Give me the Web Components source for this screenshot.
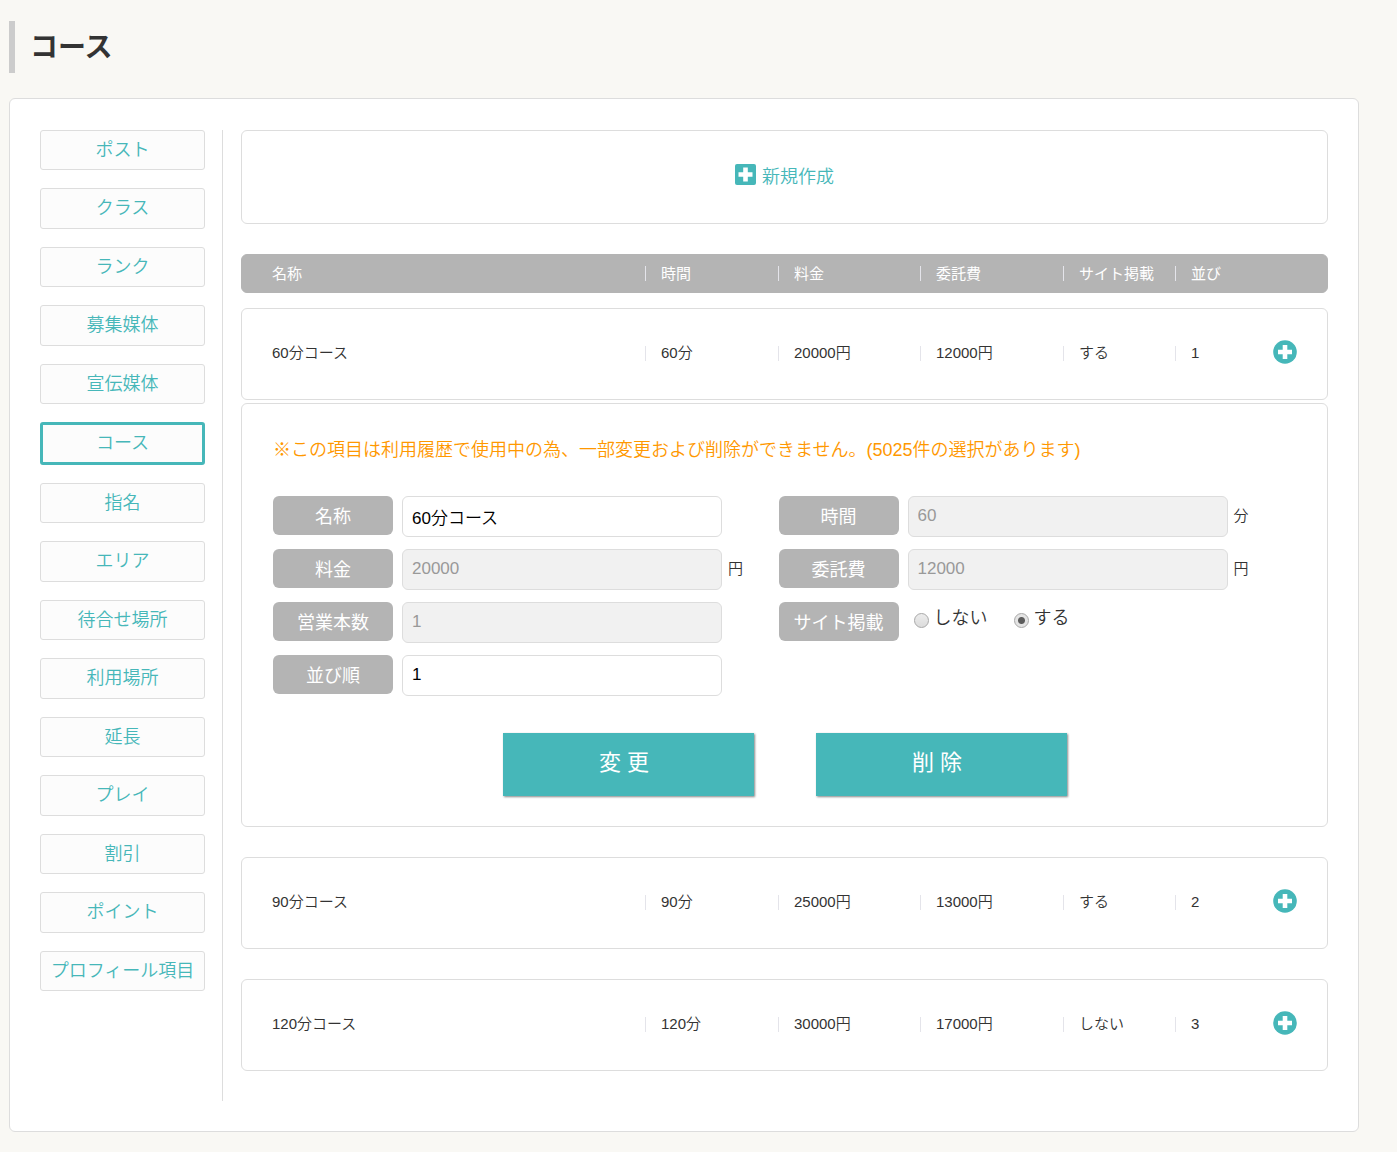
<!DOCTYPE html>
<html lang="ja">
<head>
<meta charset="utf-8">
<meta name="viewport" content="width=device-width, initial-scale=1">
<title>コース</title>
<style>
:root {
  --teal: #46b7b9;
  --grey: #b4b4b4;
  --line: #ddd;
}
body {
  margin: 0;
  background: #f9f8f4;
  color: #333;
  font: 350 15px/20px "Liberation Sans", "Noto Sans CJK JP", sans-serif;
}
</style>
</head>
<body>
<settings-page>
  <page-title slot="title">コース</page-title>
  <settings-nav slot="nav">
    <nav-item>ポスト</nav-item>
    <nav-item>クラス</nav-item>
    <nav-item>ランク</nav-item>
    <nav-item>募集媒体</nav-item>
    <nav-item>宣伝媒体</nav-item>
    <nav-item current>コース</nav-item>
    <nav-item>指名</nav-item>
    <nav-item>エリア</nav-item>
    <nav-item>待合せ場所</nav-item>
    <nav-item>利用場所</nav-item>
    <nav-item>延長</nav-item>
    <nav-item>プレイ</nav-item>
    <nav-item>割引</nav-item>
    <nav-item>ポイント</nav-item>
    <nav-item>プロフィール項目</nav-item>
  </settings-nav>
  <create-link>新規作成</create-link>
  <course-table></course-table>
</settings-page>

<script>
class BaseElement extends HTMLElement {
  connectedCallback() {
    if (this.shadowRoot) return;
    this.attachShadow({ mode: 'open' }).innerHTML =
      '<style>*{box-sizing:border-box}' + this.css() + '</style>' + this.html();
  }
}

customElements.define('settings-page', class extends BaseElement {
  css() { return `
    :host { display: block; padding: 21px 38px 20px 9px; }
    .panel { display: flex; margin-top: 25px; padding: 31px 30px 30px; border: 1px solid var(--line); border-radius: 6px; background: #fff; }
    aside { flex: none; padding-right: 17px; border-right: 1px solid var(--line); }
    main { flex: 1; min-width: 0; padding-left: 18px; }
  `; }
  html() { return `
    <header><slot name="title"></slot></header>
    <div class="panel">
      <aside><slot name="nav"></slot></aside>
      <main><slot></slot></main>
    </div>`; }
});

customElements.define('page-title', class extends BaseElement {
  css() { return `
    :host { display: block; }
    h1 { margin: 0; padding: 2px 0 0 15px; border-left: 6px solid #ccc; font-size: 28px; line-height: 50px; font-weight: 700; }
  `; }
  html() { return '<h1><slot></slot></h1>'; }
});

customElements.define('settings-nav', class extends BaseElement {
  css() { return `
    :host { display: block; }
    nav { display: flex; flex-direction: column; gap: 18px; width: 165px; min-height: 861px; }
    ::slotted(*) { flex: 1 0 auto; }
  `; }
  html() { return '<nav aria-label="設定"><slot></slot></nav>'; }
});

customElements.define('nav-item', class extends BaseElement {
  css() { return `
    :host { display: flex; }
    a { flex: 1; padding: 1px 0; border: 1px solid var(--line); border-radius: 3px; background: #fcfcfc;
        color: var(--teal); font-size: 18px; line-height: 36px; text-align: center; text-decoration: none; }
    a[aria-current] { padding: 0; border: 3px solid var(--teal); }
  `; }
  html() { return `<a href="#"${this.hasAttribute('current') ? ' aria-current="page"' : ''}><slot></slot></a>`; }
});

customElements.define('plus-icon', class extends BaseElement {
  css() { return `
    :host { display: block; color: var(--teal); }
    svg { display: block; }
  `; }
  html() {
    return this.getAttribute('shape') === 'square'
      ? '<svg width="21" height="21" viewBox="0 0 21 21" aria-hidden="true"><rect width="21" height="21" rx="2" fill="currentColor"/><path d="M8.200 3.500h4.600v4.700h4.700v4.600h-4.700v4.700H8.200v-4.700H3.500V8.200h4.700z" fill="#fff"/></svg>'
      : '<svg width="24" height="24" viewBox="0 0 24 24" aria-hidden="true"><circle cx="12" cy="12" r="11.800" fill="currentColor"/><path d="M9.700 5h4.600v4.700H19v4.600h-4.700V19H9.700v-4.700H5V9.700h4.700z" fill="#fff"/></svg>';
  }
});

customElements.define('create-link', class extends BaseElement {
  css() { return `
    :host { display: block; margin-bottom: 30px; }
    a { display: flex; justify-content: center; align-items: center; gap: 6px; height: 94px; padding-bottom: 1px;
        border: 1px solid var(--line); border-radius: 6px; color: var(--teal); font-size: 18px; line-height: 24px; text-decoration: none; }
    plus-icon { margin-bottom: 5px; }
  `; }
  html() { return '<a href="#"><plus-icon shape="square"></plus-icon><span><slot></slot></span></a>'; }
});

const COURSES = [
  ['60分コース', '60分', '20000円', '12000円', 'する', '1'],
  ['90分コース', '90分', '25000円', '13000円', 'する', '2'],
  ['120分コース', '120分', '30000円', '17000円', 'しない', '3']
];

customElements.define('course-table', class extends BaseElement {
  css() { return `
    :host { display: block; }
    table, thead, tbody { display: block; }
    tr.cols { display: grid; grid-template-columns: 373fr 133fr 142fr 143fr 112fr 98fr 24px; align-items: center;
      padding: 0 30px; border: 1px solid var(--line); border-radius: 6px; }
    thead tr.cols { height: 39px; margin-bottom: 15px; border-color: var(--grey); background: var(--grey); color: #fff; font-weight: 400; }
    tbody tr.cols { height: 92px; margin-bottom: 30px; padding-bottom: 2px; }
    tbody tr.open { margin-bottom: 3px; }
    th, td { padding: 0; font-weight: inherit; text-align: left; white-space: nowrap; }
    .cell { display: flex; align-items: center; gap: 15px; }
    .cell::before { content: ""; width: 1px; height: 15px; background: #e4e4ea; }
    tr.detail, tr.detail > td { display: block; }
    tr.detail { margin-bottom: 30px; }
    button { display: block; margin-bottom: 2px; padding: 0; border: 0; background: none; cursor: pointer; }
  `; }
  html() {
    const heads = ['名称', '時間', '料金', '委託費', 'サイト掲載', '並び'];
    const cells = (tag, role, list) => list.map((t, i) =>
      `<${tag} role="${role}"${i ? ' class="cell"' : ''}>${t}</${tag}>`).join('');
    const rows = COURSES.map((c, i) => `
      <tr role="row" class="cols${i ? '' : ' open'}">${cells('td', 'cell', c)}
        <td role="cell"><button type="button" aria-label="${c[0]}" aria-expanded="${!i}"><plus-icon></plus-icon></button></td>
      </tr>${i ? '' : '<tr role="row" class="detail"><td role="cell" colspan="7"><course-form></course-form></td></tr>'}`).join('');
    return `<table role="table">
      <thead role="rowgroup"><tr role="row" class="cols">${cells('th', 'columnheader', heads)}<td role="cell"></td></tr></thead>
      <tbody role="rowgroup">${rows}</tbody></table>`;
  }
});

const LABEL_CSS = `
  .name { flex: none; width: 120px; height: 39px; padding-top: 3px; border-radius: 6px; background: var(--grey);
          color: #fff; font-size: 18px; font-weight: 400; line-height: 36px; text-align: center; }`;

customElements.define('form-field', class extends BaseElement {
  css() { return LABEL_CSS + `
    :host { display: flex; align-items: flex-start; height: 41px; }
    input { flex: 0 1 320px; min-width: 0; height: 41px; margin: 0 6px 0 9px; padding: 0 9px 1px; border: 1px solid var(--line);
            border-radius: 6px; background: #fff; color: #000; font: inherit; font-size: 17px; }
    input:disabled { background: #f1f1f1; color: #999; }
    .unit { line-height: 40px; }
  `; }
  html() {
    const g = n => this.getAttribute(n) || '';
    return `<label class="name" for="field">${g('label')}</label>
      <input id="field" type="text" value="${g('value')}"${this.hasAttribute('locked') ? ' disabled' : ''}>
      <span class="unit">${g('unit')}</span>`;
  }
});

customElements.define('radio-field', class extends BaseElement {
  css() { return LABEL_CSS + `
    :host { display: block; height: 41px; }
    .group { display: flex; }
    .options { display: flex; gap: 26px; margin-left: 15px; }
    .options label { display: flex; gap: 5px; font-size: 18px; line-height: 32px; }
    input { appearance: none; width: 15px; height: 15px; margin: 11px 0 0; border: 1px solid #a8a8a8; border-radius: 50%;
            background: linear-gradient(#ececec, #dcdcdc); }
    input:checked { background: radial-gradient(circle, #5c5c5c 0 3px, #e4e4e4 4px); }
  `; }
  html() { return `<div class="group" role="radiogroup" aria-labelledby="name">
      <span class="name" id="name">サイト掲載</span>
      <div class="options">
        <label><input type="radio" name="site">しない</label>
        <label><input type="radio" name="site" checked>する</label>
      </div></div>`; }
});

customElements.define('course-form', class extends BaseElement {
  css() { return `
    :host { display: block; }
    form { padding: 31px 31px 30px; border: 1px solid var(--line); border-radius: 6px; }
    p { margin: 0 0 31px; color: #ff9800; font-size: 18px; line-height: 30px; }
    .fields { display: grid; grid-template-columns: 1fr 1fr; gap: 12px 0; margin-right: 12px; }
    .actions { display: flex; justify-content: center; gap: 62px; margin-top: 37px; }
    button { width: 251px; height: 63px; padding: 0 8px 3px 0; border: 0; background: var(--teal); color: #fff;
             font: inherit; font-size: 22px; font-weight: 400; box-shadow: 1px 1px 2px #888; cursor: pointer; }
  `; }
  html() { return `<form>
      <p>※この項目は利用履歴で使用中の為、一部変更および削除ができません。(5025件の選択があります)</p>
      <div class="fields">
        <form-field label="名称" value="60分コース"></form-field>
        <form-field label="時間" value="60" unit="分" locked></form-field>
        <form-field label="料金" value="20000" unit="円" locked></form-field>
        <form-field label="委託費" value="12000" unit="円" locked></form-field>
        <form-field label="営業本数" value="1" locked></form-field>
        <radio-field></radio-field>
        <form-field label="並び順" value="1"></form-field>
      </div>
      <div class="actions"><button type="button">変 更</button><button type="button">削 除</button></div>
    </form>`; }
});
</script>
</body>
</html>
